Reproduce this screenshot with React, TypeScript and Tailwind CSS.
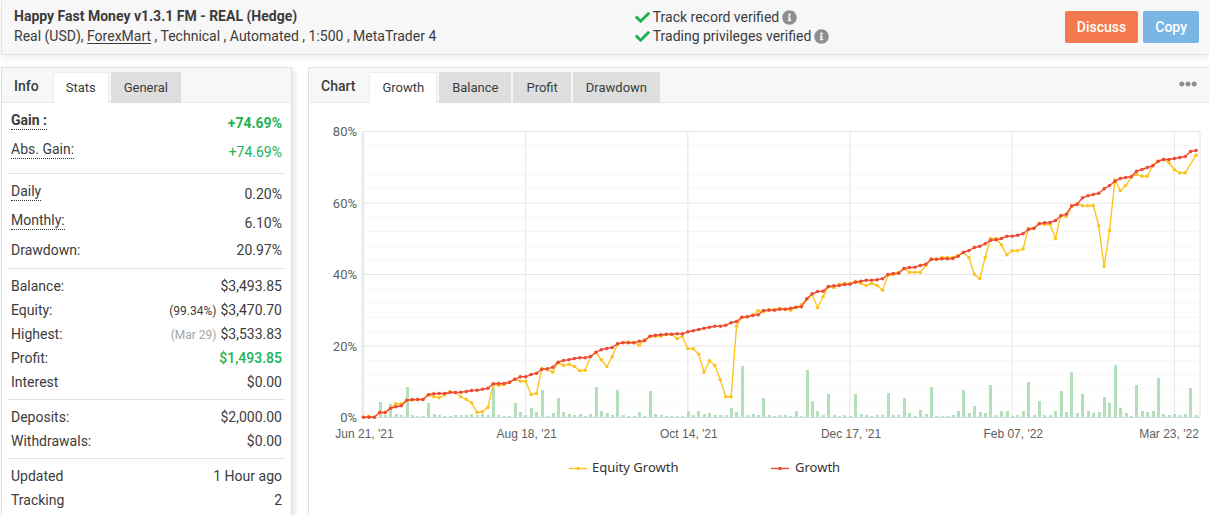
import { FaCheck, FaEllipsisH, FaInfoCircle } from 'react-icons/fa'
import clsx from 'clsx'

// Heights above the 0% line, one entry per trading day
const growth = [
  0.3, 0.3, 0.3, 5, 5, 9.3, 10.7, 11.7, 17.3, 18,
  18, 18, 22.7, 23.7, 24, 24, 25, 25, 25.3, 26,
  27, 27.3, 28.3, 29.3, 33.7, 34, 34, 35.3, 38.3, 40.7,
  40.7, 43, 44.3, 48.3, 48.7, 50.3, 55.3, 57, 57.7, 59,
  59.7, 59.7, 61, 65.3, 67.7, 69, 70, 73.7, 74.7, 74.7,
  74.7, 76.3, 76.7, 81.3, 82.3, 82.7, 83.3, 83.3, 83.7, 83.7,
  85.7, 86.7, 88, 89.3, 90.3, 91.3, 91.3, 92.3, 94.7, 96,
  100.3, 100.7, 102, 102.7, 107, 107.3, 107.3, 108.3, 108.3, 109.3,
  110.3, 110.7, 118.7, 123.7, 126, 126.3, 131, 131.7, 132, 133,
  133.3, 135.3, 136.3, 137.3, 137.3, 137.7, 138.7, 143, 144, 144.3,
  149, 150, 150.3, 152, 153.3, 158, 158.3, 158.7, 158.7, 159,
  161.3, 165.3, 167, 170, 171.3, 173.7, 177.3, 177.7, 179, 181.3,
  181.3, 182.3, 183.7, 188, 189.3, 193.7, 194.7, 195, 197, 201.7,
  203.3, 211.7, 213, 219.7, 221.7, 223, 224.3, 228.7, 232, 236.3,
  239, 240, 240.7, 246.3, 248, 250, 251.7, 256.3, 258, 258,
  259, 260, 261, 266, 267,
]

const equity: (number | null)[] = [
  0.3, 1.3, 0.3, 5, 5, 9, 13.7, 13.7, 17, 17.3,
  18, 18, 22.7, 20.7, 19.7, 22.7, 26, 25, 20.7, 18.3,
  14.7, 5, 5.7, 10, 33.3, 32, 33, 35.3, 38.3, 36.3,
  36.3, 23, 24, 48.7, 47.7, 45.3, 55, 52.3, 53.3, 51,
  46.7, 47.3, 61, 65, 57.7, 51, 60.7, 73.5, 75, 75.5,
  75, 72.3, 78, 81, 81.3, 81.3, 83, 83, 79, 81,
  69, 68.7, 63.3, 45.3, 56.7, 52, 37.7, 20.7, 20.7, 91.3,
  100.3, 100.5, 102.5, 106.7, 105.7, 108, 108, 109.3, 108.3, 107.3,
  110, 112.7, 118, 123, 109.7, 120.7, 131, 130, 133, 134,
  134, 136.3, 134, 132, 134, 132, 127.3, 142, 143, 145,
  149, 145.3, 145.3, 145.3, 152, 158.7, 158, 160, 160, 160,
  162, 165, 160, 143.3, 138.7, 160, 179, 179, 172.7, 162.7,
  166.7, 166.7, 168.7, 189, 189, 194, 193, 193, 179, 202.3,
  200.7, 211, 213.7, 211.7, 211.7, 212, 191.7, 151, 187, 237.7,
  226.7, 232, 240.3, 243.3, 241.3, 241.3, 252.3, 256, 258, 254.7,
  247.7, 244.7, 244.7, null, 262.3,
]

const bars = [
  0, 0, 0, 15, 2, 13, 3, 2, 30, 2,
  1, 1, 14, 3, 2, 1, 1, 2, 2, 2,
  3, 2, 3, 2, 30, 2, 1, 1, 14, 5,
  2, 9, 5, 27, 1, 4, 19, 5, 3, 2,
  3, 1, 3, 30, 6, 4, 2, 27, 2, 1,
  1, 5, 1, 26, 3, 2, 1, 1, 1, 1,
  6, 2, 6, 3, 4, 2, 2, 2, 9, 5,
  51, 2, 3, 2, 19, 2, 1, 2, 2, 1,
  6, 1, 47, 16, 6, 2, 23, 2, 1, 2,
  1, 23, 3, 2, 1, 2, 2, 24, 2, 2,
  19, 4, 1, 7, 3, 30, 1, 1, 1, 2,
  6, 27, 4, 11, 5, 4, 32, 2, 6, 6,
  1, 2, 6, 35, 2, 16, 2, 2, 6, 26,
  5, 45, 4, 23, 6, 4, 5, 20, 14, 52,
  9, 4, 1, 32, 6, 5, 6, 39, 3, 2,
  3, 2, 3, 29, 2,
]

const LEFT = 53
const RIGHT = 891
const TOP = 28.5
const BASE = 314.5
const px = (i: number) => 54.5 + i * 5.406
const py = (h: number) => BASE - h

const dates = [
  { i: 0, label: "Jun 21, '21" },
  { i: 30, label: "Aug 18, '21" },
  { i: 60, label: "Oct 14, '21" },
  { i: 90, label: "Dec 17, '21" },
  { i: 120, label: "Feb 07, '22" },
  { i: 150, label: "Mar 23, '22" },
]

const Series = ({ data, color }: { data: (number | null)[]; color: string }) => {
  const points = data.flatMap((h, i) => (h === null ? [] : [[px(i), py(h)]]))
  return (
    <g fill={color}>
      <polyline
        points={points.map((p) => p.join(',')).join(' ')}
        fill="none"
        stroke={color}
        strokeWidth="1.4"
        strokeLinejoin="round"
      />
      {points.map(([x, y]) => (
        <circle key={x} cx={x} cy={y} r="1.8" />
      ))}
    </g>
  )
}

const GrowthChart = () => (
  <svg viewBox="0 0 900 400" className="block w-full h-auto" role="img" aria-label="Growth chart">
    {Array.from({ length: 21 }, (_, i) => (
      <line
        key={i}
        x1={LEFT}
        x2={RIGHT}
        y1={TOP + i * 14.3}
        y2={TOP + i * 14.3}
        stroke={i % 5 ? '#f7f7f7' : '#e6e6e6'}
      />
    ))}
    <path d={`M${LEFT} ${TOP}V${BASE}M${RIGHT} ${TOP}V${BASE}`} stroke="#e2e2e2" />
    {dates.map(({ i }) => (
      <line key={i} x1={px(i)} x2={px(i)} y1={TOP} y2={BASE} stroke="#e6e6e6" />
    ))}
    {bars.map((h, i) => (
      <rect key={i} x={Math.round(px(i) - 1.2)} y={BASE - 0.5 - h} width="3" height={h} fill="#b5dfba" />
    ))}
    <line x1={LEFT} x2={RIGHT} y1={BASE} y2={BASE} stroke="#cfdcdc" />

    <Series data={equity} color="#fdc420" />
    <Series data={growth} color="#ee4b35" />

    <g className="font-[Roboto,sans-serif] text-[13px]" fill="#606060" textAnchor="end">
      {[80, 60, 40, 20, 0].map((v, i) => (
        <text key={v} x="48" y={33 + i * 71.5}>{v}%</text>
      ))}
    </g>
    <g className="font-['Liberation_Sans',Arial,sans-serif] text-[12px]" fill="#606060" textAnchor="middle">
      {dates.map(({ i, label }) => (
        <text key={i} x={Math.min(px(i) + 1, 860)} y="335">{label}</text>
      ))}
    </g>

    <g className="font-['Noto_Sans',sans-serif] text-[13px]" fill="#333333">
      <path d="M260 365.500h18" stroke="#fdc420" strokeWidth="1.4" />
      <circle cx="269" cy="365.500" r="1.800" fill="#fdc420" />
      <text x="283" y="369">Equity Growth</text>
      <path d="M462 365.500h18" stroke="#ee4b35" strokeWidth="1.4" />
      <circle cx="471" cy="365.500" r="1.800" fill="#ee4b35" />
      <text x="486" y="369">Growth</text>
    </g>
  </svg>
)

const TabBar = ({ title, tabs, active }: { title: string; tabs: string[]; active: string }) => (
  <div className="flex items-end gap-0.5 h-[35px] bg-[#f7f7f7] border-b border-[#e8e8e8]">
    <h2 className="h-[30px] px-3 leading-[29px] font-medium">{title}</h2>
    <div role="tablist" className="flex gap-0.5 -mb-px text-[13px]">
      {tabs.map((tab) => (
        <button
          key={tab}
          type="button"
          role="tab"
          aria-selected={tab === active}
          className={clsx(
            'h-[31px] px-3 leading-[28px] border border-b-0',
            tab === active ? 'bg-white border-[#ececec]' : 'bg-[#dedede] border-[#dedede]'
          )}
        >
          {tab}
        </button>
      ))}
    </div>
  </div>
)

type Stat = {
  label: string
  value: string
  hint?: boolean
  note?: string
  noteClass?: string
  valueClass?: string
  labelClass?: string
}

const sections: Stat[][] = [
  [
    { label: 'Gain :', value: '+74.69%', hint: true, labelClass: 'font-bold', valueClass: 'font-bold text-[#1fb254]' },
    { label: 'Abs. Gain:', value: '+74.69%', hint: true, valueClass: 'text-[#1fb254]' },
  ],
  [
    { label: 'Daily', value: '0.20%', hint: true },
    { label: 'Monthly:', value: '6.10%', hint: true },
    { label: 'Drawdown:', value: '20.97%' },
  ],
  [
    { label: 'Balance:', value: '$3,493.85' },
    { label: 'Equity:', value: '$3,470.70', note: '(99.34%)' },
    { label: 'Highest:', value: '$3,533.83', note: '(Mar 29)', noteClass: 'text-[#a5a5a5]' },
    { label: 'Profit:', value: '$1,493.85', valueClass: 'font-medium text-[#1fb254]' },
    { label: 'Interest', value: '$0.00' },
  ],
  [
    { label: 'Deposits:', value: '$2,000.00' },
    { label: 'Withdrawals:', value: '$0.00' },
  ],
  [
    { label: 'Updated', value: '1 Hour ago' },
    { label: 'Tracking', value: '2' },
  ],
]

const StatRow = ({ label, value, hint, note, noteClass, valueClass, labelClass }: Stat) => (
  <div className={clsx('flex justify-between px-[3px]', hint ? 'h-[29px]' : 'h-6')}>
    <dt className={clsx(hint ? 'leading-[22px]' : 'leading-6', labelClass)}>
      {hint ? <span className="inline-block leading-[17px] border-b border-dotted border-[#333]">{label}</span> : label}
    </dt>
    <dd className={clsx(hint ? 'leading-[29px]' : 'leading-6', valueClass)}>
      {note && <span className={clsx('mr-1 text-[12px]', noteClass)}>{note}</span>}
      {value}
    </dd>
  </div>
)

const Header = () => (
  <header className="grid grid-cols-[11fr_10fr] h-[55px] pl-3 pr-2.5 bg-[#f7f7f7] border-l border-b border-[#e4e4e4] shadow-[0_3px_8px_rgba(0,0,0,0.07)]">
    <div className="pt-1.5">
      <h1 className="leading-5 font-bold">Happy Fast Money v1.3.1 FM - REAL (Hedge)</h1>
      <p className="leading-5">
        Real (USD), <a href="#forexmart" className="underline underline-offset-2">ForexMart</a> , Technical , Automated , 1:500 , MetaTrader 4
      </p>
    </div>
    <div className="flex justify-between">
      <ul className="pt-2 leading-[19px]">
        {['Track record verified', 'Trading privileges verified'].map((text) => (
          <li key={text} className="flex items-center gap-[3px]">
            <FaCheck className="size-[15px] text-[#1fb254]" aria-hidden="true" />
            {text}
            <FaInfoCircle className="size-[15px] text-[#8e8e8e]" aria-hidden="true" />
          </li>
        ))}
      </ul>
      <div className="flex gap-[5px] pt-[11px]">
        <button type="button" className="h-8 px-3 rounded-xs bg-[#f47a4d] text-white font-medium">Discuss</button>
        <button type="button" className="h-8 px-3 rounded-xs bg-[#79b6e4] text-white font-medium">Copy</button>
      </div>
    </div>
  </header>
)

export default function App() {
  return (
    <div className="flex flex-col min-h-screen pl-px bg-white font-[Roboto,sans-serif] text-[14px] text-[#3c3c3c]">
      <Header />
      <main className="flex flex-1 gap-4 pt-3">
        <section className="w-[291px] shrink-0 border border-b-0 border-[#dfdfdf] bg-white shadow-[3px_3px_6px_rgba(0,0,0,0.1)]">
          <TabBar title="Info" tabs={['Stats', 'General']} active="Stats" />
          <div className="px-1.5">
            {sections.map((rows, i) => (
              <dl
                key={i}
                className={clsx(
                  i < 2 ? 'py-1.5' : 'pt-[5px]',
                  (i === 2 || i === 3) && 'pb-[5px]',
                  i < sections.length - 1 && 'border-b border-[#e4e4e4]'
                )}
              >
                {rows.map((row) => (
                  <StatRow key={row.label} {...row} />
                ))}
              </dl>
            ))}
          </div>
        </section>

        <section className="flex-1 min-w-0 border-t border-l border-[#dfdfdf] bg-white">
          <div className="relative">
            <TabBar title="Chart" tabs={['Growth', 'Balance', 'Profit', 'Drawdown']} active="Growth" />
            <button type="button" aria-label="Chart options" className="absolute right-3 top-[7px] text-[#8e8e8e]">
              <FaEllipsisH className="size-[18px]" />
            </button>
          </div>
          <GrowthChart />
        </section>
      </main>
    </div>
  )
}
